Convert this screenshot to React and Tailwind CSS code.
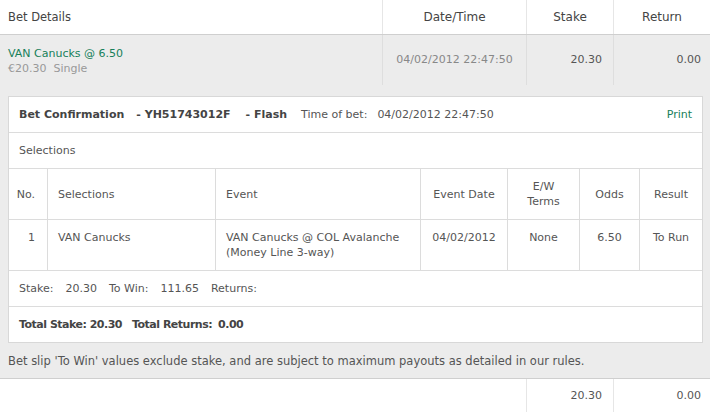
import React from "react";

const cols = [
  { label: "No.", w: "w-[39px]", align: "justify-end pr-3 text-right" },
  { label: "Selections", w: "w-[168px]", align: "pl-[10px]" },
  { label: "Event", w: "w-[205px]", align: "pl-[10px]" },
  { label: "Event Date", w: "w-[87px]", align: "justify-center text-center" },
  { label: "E/W\nTerms", w: "w-[72px]", align: "justify-center text-center" },
  { label: "Odds", w: "w-[60px]", align: "justify-center text-center" },
  { label: "Result", w: "flex-1", align: "justify-center text-center" },
];

const row = [
  "1",
  "VAN Canucks",
  "VAN Canucks @ COL Avalanche\n(Money Line 3-way)",
  "04/02/2012",
  "None",
  "6.50",
  "To Run",
];

export default function App() {
  return (
    <div className="w-[710px] h-[412px] overflow-hidden bg-white font-['DejaVu_Sans',Verdana,sans-serif] text-[11px] text-[#555]">
      {/* top header */}
      <div className="flex h-[35px] border-b border-[#cfcfcf] text-[12px] text-[#444]">
        <div className="w-[383px] flex items-center pl-2 pt-[1px] text-[11.5px] border-r border-[#e6e6e6]">Bet Details</div>
        <div className="w-[144px] flex items-center justify-center border-r border-[#e6e6e6]">Date/Time</div>
        <div className="w-[87px] flex items-center justify-center border-r border-[#e6e6e6]">Stake</div>
        <div className="flex-1 flex items-center justify-center">Return</div>
      </div>

      {/* bet row */}
      <div className="flex h-[50px] bg-[#ececec]">
        <div className="w-[383px] flex flex-col justify-center pl-2 pt-[1px] border-r border-[#dedede] leading-[15px]">
          <span className="text-[#17805a]">VAN Canucks @ 6.50</span>
          <span className="text-[#999]">€20.30&nbsp; Single</span>
        </div>
        <div className="w-[144px] flex items-center justify-center border-r border-[#dedede] text-[#888]">04/02/2012 22:47:50</div>
        <div className="w-[87px] flex items-center justify-end pr-[11px] border-r border-[#dedede] text-[#555]">20.30</div>
        <div className="flex-1 flex items-center justify-end pr-[9px] text-[#555]">0.00</div>
      </div>

      {/* confirmation area */}
      <div className="bg-[#ececec] pt-[11px] border-b border-[#cfcfcf]">
        <div className="ml-2 w-[695px] bg-white border border-[#d8d8d8]">
          <div className="flex items-center h-[36px] border-b border-[#dcdcdc] pl-[10px] pr-[10px] pt-[2px] text-[#555]">
            <span className="font-bold text-[#444]">Bet Confirmation</span>
            <span className="font-bold text-[#444] ml-[12px]">- YH51743012F</span>
            <span className="font-bold text-[#444] ml-[15px]">- Flash</span>
            <span className="ml-[14px]">Time of bet:</span>
            <span className="ml-[10px]">04/02/2012 22:47:50</span>
            <span className="ml-auto text-[#17805a]">Print</span>
          </div>
          <div className="flex items-center h-[36px] border-b border-[#dcdcdc] pl-[10px] pt-[1px]">Selections</div>

          <div className="flex h-[51px] border-b border-[#dcdcdc]">
            {cols.map((c, i) => (
              <div
                key={c.label}
                className={`${c.w} flex items-center whitespace-pre-line leading-[15px] ${c.align} ${i < cols.length - 1 ? "border-r border-[#dcdcdc]" : ""}`}
              >
                {c.label}
              </div>
            ))}
          </div>
          <div className="flex h-[51px] border-b border-[#dcdcdc]">
            {cols.map((c, i) => (
              <div
                key={c.label}
                className={`${c.w} flex pt-[10px] whitespace-pre-line leading-[15px] ${c.align} ${i < cols.length - 1 ? "border-r border-[#dcdcdc]" : ""}`}
              >
                {row[i]}
              </div>
            ))}
          </div>

          <div className="flex items-center h-[36px] border-b border-[#dcdcdc] pl-[10px] pt-[1px]">
            <span>Stake:</span>
            <span className="ml-[12px]">20.30</span>
            <span className="ml-[12px]">To Win:</span>
            <span className="ml-[12px]">111.65</span>
            <span className="ml-[12px]">Returns:</span>
          </div>
          <div className="flex items-center h-[35px] pl-[10px] pt-[1px] font-bold text-[#444] tracking-[-0.5px]">
            <span>Total Stake: 20.30</span>
            <span className="ml-[10px]">Total Returns:</span>
            <span className="ml-[6px]">0.00</span>
          </div>
        </div>
        <div className="h-[35px] flex items-center pl-2 pt-[3px] text-[11.5px] text-[#555]">
          Bet slip 'To Win' values exclude stake, and are subject to maximum payouts as detailed in our rules.
        </div>
      </div>

      {/* bottom totals */}
      <div className="flex h-[34px]">
        <div className="w-[527px] border-r border-[#e6e6e6]"></div>
        <div className="w-[87px] flex items-center justify-end pr-[11px] pt-[1px] border-r border-[#e6e6e6]">20.30</div>
        <div className="flex-1 flex items-center justify-end pr-[9px] pt-[1px]">0.00</div>
      </div>
    </div>
  );
}
